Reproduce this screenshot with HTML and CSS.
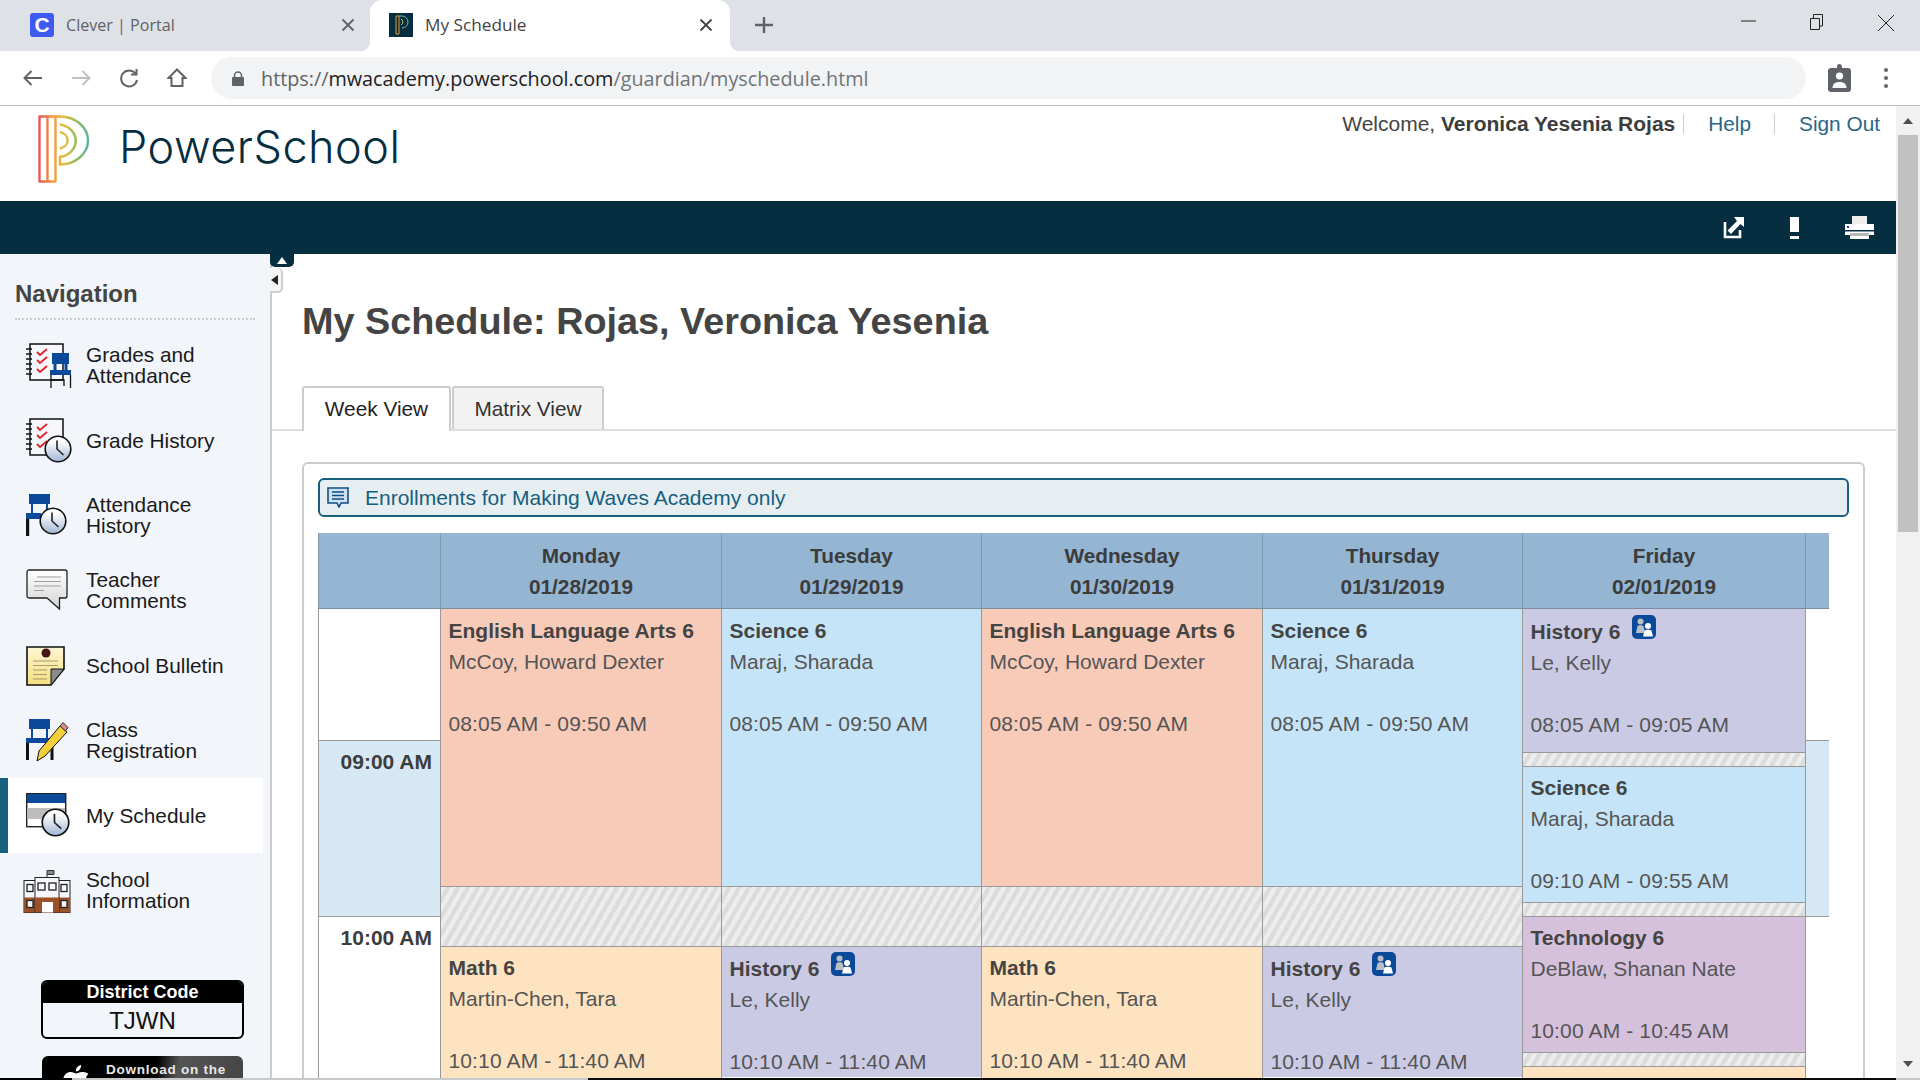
FILE: index.html
```html
<!DOCTYPE html>
<html>
  <head>
    <meta charset="utf-8">
    <meta name="viewport" content="width=device-width, initial-scale=1.0">
    <title>My Schedule</title>
    <link rel="stylesheet" href="styles.css">
  </head>
  <body>
    <svg class="defs" width="0" height="0">
      <defs>
        <linearGradient id="clockfill" x1="0" y1="0" x2="0" y2="1">
          <stop offset="0.2" stop-color="#ffffff"/>
          <stop offset="1" stop-color="#9fb4d4"/>
        </linearGradient>
        <linearGradient id="bubblefill" x1="0" y1="0" x2="0" y2="1">
          <stop offset="0" stop-color="#ffffff"/>
          <stop offset="1" stop-color="#d4d4d4"/>
        </linearGradient>
        <linearGradient id="notefill" x1="0" y1="0" x2="0" y2="1">
          <stop offset="0" stop-color="#fdf6d4"/>
          <stop offset="1" stop-color="#f6df7e"/>
        </linearGradient>
        <linearGradient id="logofill" gradientUnits="userSpaceOnUse" x1="0" y1="0" x2="52" y2="0">
          <stop offset="0" stop-color="#e4525a"/>
          <stop offset="0.3" stop-color="#f59a3c"/>
          <stop offset="0.5" stop-color="#e6bf3e"/>
          <stop offset="0.75" stop-color="#8dbb5a"/>
          <stop offset="1" stop-color="#56b3a6"/>
        </linearGradient>
        <symbol id="clock" viewBox="0 0 28 28">
          <circle cx="14" cy="14" r="12.8" fill="url(#clockfill)" stroke="#111" stroke-width="1.6"/>
          <path d="M13 5.5V14L19.5 20" fill="none" stroke="#222" stroke-width="1.6"/>
        </symbol>
        <symbol id="notebook" viewBox="0 0 38 38">
          <rect x="4" y="1" width="33" height="36" fill="#f6f7fa" stroke="#111" stroke-width="1.5"/>
          <path d="M0 6H6M0 11H6M0 16H6M0 21H6M0 26H6M0 31H6" stroke="#111" stroke-width="1.3"/>
          <path d="M11 9L14 12L21 6M11 17L14 20L21 14M11 26L14 29L21 23" fill="none" stroke="#e4202e" stroke-width="1.8"/>
        </symbol>
        <symbol id="person" viewBox="0 0 24 24">
          <rect width="24" height="24" rx="5" fill="#0b4a9a"/>
          <circle cx="8.5" cy="6.500" r="3" fill="#b9bfc4"/>
          <path d="M4 18L5.500 11C6.500 10 10.500 10 11.500 11L13 18Z" fill="#b9bfc4"/>
          <circle cx="16" cy="11" r="3" fill="#fff"/>
          <path d="M11 21.500L12.500 15.500C13.500 14.500 18.500 14.500 19.500 15.500L21 21.500Z" fill="#fff"/>
        </symbol>
      </defs>
    </svg>

    <div class="tabstrip">
      <div class="tab">
        <span class="favicon clever">C</span>
        <span class="tab-title">Clever | Portal</span>
        <svg class="tab-close" viewBox="0 0 14 14"><path d="M1.5 1.5L12.5 12.5M12.5 1.5L1.5 12.5"/></svg>
      </div>
      <div class="tab active">
        <svg class="favicon" viewBox="0 0 24 24">
          <rect width="24" height="24" fill="#052e40"/>
          <path d="M7 3H10V21H7Z" fill="none" stroke="#e89a3c"/>
          <path d="M10 3H13A6 6 0 0 1 13 15" fill="none" stroke="#7dbb8c"/>
          <path d="M12 6A3.4 3.4 0 0 1 12 12" fill="none" stroke="#c4c45a"/>
        </svg>
        <span class="tab-title">My Schedule</span>
        <svg class="tab-close dark" viewBox="0 0 14 14"><path d="M1.5 1.5L12.5 12.5M12.5 1.5L1.5 12.5"/></svg>
      </div>
      <svg class="newtab" viewBox="0 0 20 16"><path d="M10 0V16M1 8H19"/></svg>
      <div class="winctl">
        <svg width="16" height="16" viewBox="0 0 16 16"><path d="M0 7H15"/></svg>
        <svg width="16" height="16" viewBox="0 0 16 16"><path d="M1.5 4.5H10.5V15.5H1.5ZM4.5 4.5V0.5H13.5V12H10.5"/></svg>
        <svg width="18" height="18" viewBox="0 0 18 18"><path d="M1 1L17 17M17 1L1 17"/></svg>
      </div>
    </div>

    <div class="addressbar">
      <svg class="navbtn" viewBox="0 0 20 16"><path d="M19 8H2M8.5 1L1.5 8L8.5 15"/></svg>
      <svg class="navbtn off" viewBox="0 0 20 16"><path d="M1 8H18M11.5 1L18.5 8L11.5 15"/></svg>
      <svg class="navbtn" viewBox="0 0 20 20"><path d="M16.5 5.5A8 8 0 1 0 18 12M17.5 1V6.5H12"/></svg>
      <svg class="navbtn" viewBox="0 0 20 20"><path d="M10 1.5L18.5 10H15.5V18H4.5V10H1.5Z"/></svg>
      <div class="omnibox">
        <svg class="lock" viewBox="0 0 14 15"><path d="M3.5 6.5V4.5A3.5 3.5 0 0 1 10.5 4.5V6.5" fill="none" stroke="#5f6368" stroke-width="1.5"/><rect x="1" y="6" width="12" height="9" rx="1" fill="#5f6368"/></svg>
        <span class="url"><span class="url-dim">https://</span>mwacademy.powerschool.com<span class="url-dim2">/guardian/myschedule.html</span></span>
      </div>
      <svg class="badge" viewBox="0 0 23 28"><path d="M9 4V2.5A2.5 2.5 0 0 1 14 2.5V4H20A3 3 0 0 1 23 7V25A3 3 0 0 1 20 28H3A3 3 0 0 1 0 25V7A3 3 0 0 1 3 4Z" fill="#5f6368"/><circle cx="11.5" cy="12" r="3.6" fill="#fff"/><path d="M4.5 24C4.5 19.5 8 18 11.5 18S18.5 19.5 18.5 24Z" fill="#fff"/></svg>
      <div class="dots"><i></i><i></i><i></i></div>
    </div>

    <div class="page">
      <div class="view">
        <header class="ps-header">
          <svg class="ps-logo" width="52" height="68" viewBox="0 0 52 68">
            <g fill="none" stroke="url(#logofill)" stroke-width="2.4" stroke-linejoin="round">
              <path d="M1.5 1.5H9.500V66.500H1.500Z"/>
              <path d="M9.500 1.500H17.500V66.500H9.500"/>
              <path d="M17.500 1.500H22A28 24 0 0 1 22 49.500V42A19 16.500 0 0 0 22 9.500"/>
              <path d="M22 17A10 8.500 0 0 1 22 33.500"/>
            </g>
          </svg>
          <span class="wordmark">PowerSchool</span>
          <div class="userlinks">
            <span class="welcome">Welcome, <b>Veronica Yesenia Rojas</b></span>
            <span class="sep"></span>
            <a href="#">Help</a>
            <span class="sep sep-wide"></span>
            <a href="#">Sign Out</a>
          </div>
        </header>

        <div class="toolbar">
          <svg class="tool" width="21" height="22" viewBox="0 0 21 22"><path d="M2 5V20H17V13" fill="none" stroke="#fff" stroke-width="2.6"/><path d="M21 0V10L17.5 7L8 17L4.5 13.5L14 4L11 0Z" fill="#fff"/></svg>
          <svg class="tool" width="9" height="22" viewBox="0 0 9 22"><path d="M0 0H9V15H0ZM0 19H9V22H0Z" fill="#fff"/></svg>
          <svg class="tool" width="29" height="23" viewBox="0 0 29 23"><path d="M7 0H22V9H7Z" fill="#eee"/><path d="M0 8H29V17H0Z" fill="#fff"/><path d="M0 14H29V15.5H0Z" fill="#052e40"/><path d="M2 10H4V12H2Z" fill="#2222cc"/><path d="M5 17H24V20H5Z" fill="#b8b8b8"/><path d="M0 17H5V19H0ZM24 17H29V19H24ZM5 20H24V23H5Z" fill="#fff"/></svg>
        </div>

        <div class="workspace">
          <aside class="sidebar">
            <h2 class="nav-title">Navigation</h2>
            <nav class="nav">
              <a class="nav-item" href="#">
                <svg class="nav-icon" viewBox="0 0 46 46">
                  <use href="#notebook" x="0" y="0" width="38" height="38"/>
                  <rect x="26" y="10" width="17" height="11" fill="#0b4a9a"/>
                  <path d="M29 21V27M40 21V27" stroke="#0b4a9a" stroke-width="3"/>
                  <rect x="24" y="27" width="21" height="5" fill="#0b4a9a"/>
                  <path d="M25 32V45M44.500 32V45M25 37H38V43" fill="none" stroke="#111" stroke-width="1.3"/>
                </svg>
                <span class="two-line">Grades and<br>Attendance</span>
              </a>
              <a class="nav-item" href="#">
                <svg class="nav-icon" viewBox="0 0 46 46">
                  <use href="#notebook" x="0" y="0" width="38" height="38"/>
                  <use href="#clock" x="18" y="17" width="28" height="28"/>
                </svg>
                <span>Grade History</span>
              </a>
              <a class="nav-item" href="#">
                <svg class="nav-icon" viewBox="0 0 46 46">
                  <rect x="3" y="1" width="21" height="10" fill="#0b4a9a"/>
                  <path d="M6 11V20M21 11V20" stroke="#0b4a9a" stroke-width="2"/>
                  <rect x="0" y="20" width="15" height="6" fill="#0b4a9a"/>
                  <rect x="0" y="26" width="3.200" height="17" fill="#111"/>
                  <use href="#clock" x="13" y="14" width="28" height="28"/>
                </svg>
                <span class="two-line">Attendance<br>History</span>
              </a>
              <a class="nav-item" href="#">
                <svg class="nav-icon" viewBox="0 0 46 46">
                  <path d="M3 2H39A2 2 0 0 1 41 4V28A2 2 0 0 1 39 30H33.500V41L21 30H3A2 2 0 0 1 1 28V4A2 2 0 0 1 3 2Z" fill="url(#bubblefill)" stroke="#222" stroke-width="1.3"/>
                  <path d="M11 9H35M8 13.500H35M8 18H35M8 22.500H18" stroke="#a0a0a0" stroke-width="1.2"/>
                </svg>
                <span class="two-line">Teacher<br>Comments</span>
              </a>
              <a class="nav-item" href="#">
                <svg class="nav-icon" viewBox="0 0 46 46">
                  <path d="M1 4H38V26L25 42H1Z" fill="url(#notefill)" stroke="#111" stroke-width="1.600"/>
                  <path d="M38 26H25V42Z" fill="#8a8a8a" stroke="#111" stroke-width="1"/>
                  <circle cx="20" cy="10" r="4.500" fill="#4a1414"/>
                  <path d="M7 18H32M7 22.500H32M7 27H21M7 31.500H21M7 36H21" stroke="#a89a6a" stroke-width="1.200"/>
                </svg>
                <span>School Bulletin</span>
              </a>
              <a class="nav-item" href="#">
                <svg class="nav-icon" viewBox="0 0 46 46">
                  <rect x="3" y="1" width="21" height="10" fill="#0b4a9a"/>
                  <path d="M6 11V20M21 11V20" stroke="#0b4a9a" stroke-width="2"/>
                  <rect x="0" y="20" width="27" height="5" fill="#0b4a9a"/>
                  <path d="M1.500 25V42M26 25V42" stroke="#111" stroke-width="3"/>
                  <path d="M11 43L13 33L34 8L41 14L19 38Z" fill="#f5cf3a" stroke="#111" stroke-width="1"/>
                  <path d="M34 8L37 4.500L42 9.500L39.500 13Z" fill="#d98a8a" stroke="#333" stroke-width="1"/>
                </svg>
                <span class="two-line">Class<br>Registration</span>
              </a>
              <a class="nav-item current" href="#">
                <svg class="nav-icon" viewBox="0 0 46 46">
                  <rect x="0.700" y="0.700" width="39" height="33" fill="#fff" stroke="#222" stroke-width="1.400"/>
                  <rect x="1" y="1" width="38" height="9" fill="#0b4a9a"/>
                  <rect x="1" y="15" width="38" height="11" fill="#bdbdbd"/>
                  <use href="#clock" x="15" y="15" width="29" height="29"/>
                </svg>
                <span>My Schedule</span>
              </a>
              <a class="nav-item" href="#">
                <svg class="nav-icon wide" viewBox="0 0 48 46">
                  <path d="M24 9.500V2.500H31V6.500H24" fill="#888" stroke="#333" stroke-width="1"/>
                  <rect x="1" y="12.500" width="46" height="32" fill="#f6f7fa" stroke="#222" stroke-width="1"/>
                  <rect x="1" y="29.500" width="46" height="15" fill="#9a5127"/>
                  <rect x="12" y="9.500" width="24" height="35" fill="#f6f7fa" stroke="#222" stroke-width="1"/>
                  <rect x="12" y="29.500" width="24" height="15" fill="#9a5127"/>
                  <rect x="15" y="15" width="7" height="7" fill="none" stroke="#222" stroke-width="1.300"/>
                  <rect x="26" y="15" width="7" height="7" fill="none" stroke="#222" stroke-width="1.300"/>
                  <rect x="4" y="16.500" width="6" height="7" fill="none" stroke="#222" stroke-width="1.300"/>
                  <rect x="38" y="16.500" width="6" height="7" fill="none" stroke="#222" stroke-width="1.300"/>
                  <rect x="4" y="32.500" width="6" height="7" fill="#f2f2f2" stroke="#222" stroke-width="1.300"/>
                  <rect x="38" y="32.500" width="6" height="7" fill="#f2f2f2" stroke="#222" stroke-width="1.300"/>
                  <rect x="19" y="34" width="11" height="10.500" fill="#fff"/>
                </svg>
                <span class="two-line">School<br>Information</span>
              </a>
            </nav>
            <div class="district">
              <div class="district-label">District Code</div>
              <div class="district-code">TJWN</div>
            </div>
            <div class="appstore">
              <svg class="apple" width="27" height="30" viewBox="0 0 27 30"><path d="M19 7C16 7 15 8.500 13.500 8.500S10 7 7.500 7C3.500 7 0 10.500 0 16C0 22.500 5 30 8 30C10 30 11 28.500 13.500 28.500S17 30 19 30C22 30 27 22 27 20C24 18.500 23 16 23 14C23 11.500 24.500 9.500 25.500 9C24 7.500 21.500 7 19 7ZM18 0C18.500 3.500 15.500 6.500 13 6.500C12.500 3.500 15 0.500 18 0Z" fill="#fff"/></svg>
              <span>Download on the</span>
            </div>
          </aside>

          <button class="pull pull-up" aria-label="Collapse header"></button>
          <button class="pull pull-left" aria-label="Collapse navigation"></button>

          <main class="content">
            <h1 class="title">My Schedule: Rojas, Veronica Yesenia</h1>
            <div class="viewtabs">
              <a class="viewtab selected" href="#">Week View</a>
              <a class="viewtab" href="#">Matrix View</a>
            </div>
            <section class="box">
              <div class="notice">
                <svg class="notice-icon" width="22" height="21" viewBox="0 0 22 21">
                  <path d="M1 1H21V16H14L12 20L10 16H1Z" fill="#cfe0f2" stroke="#0f4f86" stroke-width="1.600"/>
                  <path d="M5 5H17M5 8.500H17M5 12H17" stroke="#0f4f86" stroke-width="1.500"/>
                </svg>
                <span>Enrollments for Making Waves Academy only</span>
              </div>

              <div class="week week-head">
                <div class="daycell"></div>
                <div class="daycell">Monday<br>01/28/2019</div>
                <div class="daycell">Tuesday<br>01/29/2019</div>
                <div class="daycell">Wednesday<br>01/30/2019</div>
                <div class="daycell">Thursday<br>01/31/2019</div>
                <div class="daycell">Friday<br>02/01/2019</div>
                <div class="daycell"></div>
              </div>

              <div class="week week-body">
                <div class="col">
                  <div class="hour h-first"></div>
                  <div class="hour h-nine">09:00 AM</div>
                  <div class="hour h-ten">10:00 AM</div>
                </div>

                <div class="col day">
                  <div class="block ela long">
                    <p class="course">English Language Arts 6</p>
                    <p>McCoy, Howard Dexter</p>
                    <p class="when">08:05 AM - 09:50 AM</p>
                  </div>
                  <div class="gap gap-long"></div>
                  <div class="block math">
                    <p class="course">Math 6</p>
                    <p>Martin-Chen, Tara</p>
                    <p class="when">10:10 AM - 11:40 AM</p>
                  </div>
                </div>

                <div class="col day">
                  <div class="block science long">
                    <p class="course">Science 6</p>
                    <p>Maraj, Sharada</p>
                    <p class="when">08:05 AM - 09:50 AM</p>
                  </div>
                  <div class="gap gap-long"></div>
                  <div class="block history">
                    <p class="course">History 6 <svg class="people"><use href="#person"/></svg></p>
                    <p>Le, Kelly</p>
                    <p class="when">10:10 AM - 11:40 AM</p>
                  </div>
                </div>

                <div class="col day">
                  <div class="block ela long">
                    <p class="course">English Language Arts 6</p>
                    <p>McCoy, Howard Dexter</p>
                    <p class="when">08:05 AM - 09:50 AM</p>
                  </div>
                  <div class="gap gap-long"></div>
                  <div class="block math">
                    <p class="course">Math 6</p>
                    <p>Martin-Chen, Tara</p>
                    <p class="when">10:10 AM - 11:40 AM</p>
                  </div>
                </div>

                <div class="col day">
                  <div class="block science long">
                    <p class="course">Science 6</p>
                    <p>Maraj, Sharada</p>
                    <p class="when">08:05 AM - 09:50 AM</p>
                  </div>
                  <div class="gap gap-long"></div>
                  <div class="block history">
                    <p class="course">History 6 <svg class="people"><use href="#person"/></svg></p>
                    <p>Le, Kelly</p>
                    <p class="when">10:10 AM - 11:40 AM</p>
                  </div>
                </div>

                <div class="col day">
                  <div class="block history p1">
                    <p class="course">History 6 <svg class="people"><use href="#person"/></svg></p>
                    <p>Le, Kelly</p>
                    <p class="when">08:05 AM - 09:05 AM</p>
                  </div>
                  <div class="gap gap-short"></div>
                  <div class="block science p2">
                    <p class="course">Science 6</p>
                    <p>Maraj, Sharada</p>
                    <p class="when">09:10 AM - 09:55 AM</p>
                  </div>
                  <div class="gap gap-short"></div>
                  <div class="block tech p3">
                    <p class="course">Technology 6</p>
                    <p>DeBlaw, Shanan Nate</p>
                    <p class="when">10:00 AM - 10:45 AM</p>
                  </div>
                  <div class="gap gap-short"></div>
                  <div class="block math"></div>
                </div>

                <div class="col day">
                  <div class="hour h-first"></div>
                  <div class="hour h-nine"></div>
                  <div class="hour h-ten"></div>
                </div>
              </div>
            </section>
          </main>
        </div>
      </div>

      <div class="scrollbar">
        <div class="sb-btn"><i class="sb-up"></i></div>
        <div class="sb-thumb"></div>
        <div class="sb-btn sb-end"><i class="sb-down"></i></div>
      </div>
    </div>

    <div class="taskstrip">
      <i class="ts-a"></i><i class="ts-b"></i><i class="ts-c"></i><i class="ts-d"></i>
    </div>
  </body>
</html>
```

FILE: styles.css
```css
* {
  box-sizing: border-box;
}
html, body {
  height: 1080px;
  margin: 0;
  overflow: hidden;
}
body {
  background:  #fff;
  color:       #444;
  font-family: "Liberation Sans", Arial, sans-serif;
  font-size:   20.8px;
}
a {
  color:           #2a6685;
  text-decoration: none;
}
p {
  margin: 0;
}
.defs {
  display:  block;
  height:   0;
  position: absolute;
}

/* browser chrome */
.tabstrip {
  align-items: flex-end;
  background:  #dee1e6;
  display:     flex;
  height:      51px;
  padding-left: 18px;
}
.tab {
  align-items: center;
  display:     flex;
  height:      51px;
  padding:     0 15px 2px 12px;
  width:       352px;
  font-family: "Open Sans", sans-serif;
  font-size:   16.1px;
  color:       #5f6368;
}
.tab.active {
  background:    #fff;
  border-radius: 12px 12px 0 0;
  color:         #444;
  font-size:     17.2px;
  padding:       0 17px 2px 19px;
  position:      relative;
  width:         360px;
}
.tab.active::before,
.tab.active::after {
  bottom:   0;
  content:  "";
  height:   10px;
  position: absolute;
  width:    10px;
}
.tab.active::before {
  background: radial-gradient(circle at 0 0, #dee1e6 10px, #fff 10.5px);
  left:       -10px;
}
.tab.active::after {
  background: radial-gradient(circle at 100% 0, #dee1e6 10px, #fff 10.5px);
  right:      -10px;
}
.favicon {
  flex:   none;
  height: 24px;
  width:  24px;
}
.clever {
  background:    #3d5af1;
  border-radius: 3px;
  color:         #fff;
  font-family:   "Liberation Sans", sans-serif;
  font-size:     21px;
  font-weight:   bold;
  line-height:   24px;
  text-align:    center;
}
.tab-title {
  flex:        1;
  margin-left: 12px;
}
.tab-close {
  fill:         none;
  height:       14px;
  stroke:       #5f6368;
  stroke-width: 1.8;
  width:        14px;
}
.tab-close.dark {
  stroke: #444;
}
.newtab {
  align-self:    center;
  fill:          none;
  height:        16px;
  margin-bottom: 2px;
  margin-left:   24px;
  stroke:        #5f6368;
  stroke-width:  2.4;
  width:         20px;
}
.winctl {
  align-items: flex-start;
  display:     flex;
  gap:         52px;
  margin-left: auto;
  padding:     14px 25px 0 0;
  align-self:  flex-start;
}
.winctl svg {
  fill:         none;
  stroke:       #222;
  stroke-width: 1;
}
.addressbar {
  align-items:   center;
  background:    #fff;
  border-bottom: 1px solid #bbb;
  display:       flex;
  height:        55px;
  padding-left:  23px;
}
.navbtn {
  fill:            none;
  height:          20px;
  margin-right:    28px;
  stroke:          #5f6368;
  stroke-width:    2;
  width:           20px;
}
.navbtn.off {
  stroke: #bdc1c6;
}
.navbtn:nth-child(4) {
  margin-right: 24px;
}
.omnibox {
  align-items:   center;
  background:    #f1f3f4;
  border-radius: 21px;
  display:       flex;
  height:        42px;
  padding-left:  20px;
  width:         1595px;
}
.lock {
  height:       15px;
  margin-right: 16px;
  width:        14px;
}
.url {
  color:       #202124;
  font-family: "Open Sans", sans-serif;
  font-size:   19.8px;
}
.url-dim {
  color: #5f6368;
}
.url-dim2 {
  color: #70757a;
}
.badge {
  height:      28px;
  margin-left: 22px;
  width:       23px;
}
.dots {
  display:        flex;
  flex-direction: column;
  gap:            4px;
  margin-left:    33px;
}
.dots i {
  background:    #5f6368;
  border-radius: 50%;
  height:        4px;
  width:         4px;
}

/* page */
.page {
  display: flex;
  height:  972px;
}
.view {
  display:        flex;
  flex-direction: column;
  width:          1896px;
}
.ps-header {
  align-items: flex-start;
  display:     flex;
  height:      95px;
  padding:     9px 16px 0 38px;
}
.ps-logo {
  flex: none;
}
.wordmark {
  color:          #052e40;
  font-family:    "Inter", sans-serif;
  font-size:      45px;
  font-weight:    300;
  letter-spacing: 0.5px;
  line-height:    54px;
  margin:         5px 0 0 29px;
}
.userlinks {
  align-items: center;
  display:     flex;
  font-size:   21px;
  line-height: 24px;
  margin-left: auto;
  margin-top:  -3px;
}
.userlinks a {
  font-size: 20.8px;
}
.userlinks b {
  color: #3c3c3c;
}
.sep {
  background: #ccc;
  height:     20px;
  margin:     0 24px 0 8px;
  width:      1px;
}
.sep-wide {
  margin-left: 23px;
}
.toolbar {
  align-items: center;
  background:  #052e40;
  display:     flex;
  flex:        none;
  gap:         0;
  height:      53px;
  padding:     0 22px 0 0;
  justify-content: flex-end;
}
.tool:nth-child(1) {
  margin-right: 46px;
}
.tool:nth-child(2) {
  margin-right: 46px;
}

/* sidebar */
.workspace {
  display:  flex;
  flex:     1;
  min-height: 0;
  position: relative;
}
.sidebar {
  background:   #f2f5fa;
  border-right: 2px solid #ccc;
  flex:         none;
  overflow:     hidden;
  padding-top:  26px;
  width:        272px;
}
.nav-title {
  border-bottom: 2px dotted #ccc;
  color:         #444;
  font-size:     24px;
  line-height:   28px;
  margin:        0 15px 8px 15px;
  padding-bottom: 10px;
}
.nav-item {
  align-items: center;
  color:       #1a1a1a;
  display:     flex;
  height:      75px;
  line-height: 21px;
  padding-left: 26px;
  width:       263px;
}
.nav-item.current {
  background:   #fff;
  border-left:  8px solid #175f7e;
  padding-left: 18px;
}
.two-line {
  padding-bottom: 2px;
}
.nav-icon {
  flex:         none;
  height:       46px;
  margin-right: 14px;
  width:        46px;
}
.nav-icon.wide {
  margin-left:  -3px;
  margin-right: 15px;
  width:        48px;
}
.district {
  border:        2px solid #000;
  border-radius: 6px;
  height:        59px;
  margin:        52px 0 0 41px;
  overflow:      hidden;
  text-align:    center;
  width:         203px;
}
.district-label {
  background:  #000;
  color:       #fff;
  font-size:   18px;
  font-weight: bold;
  height:      21px;
  line-height: 21px;
}
.district-code {
  color:       #111;
  font-size:   24px;
  line-height: 36px;
}
.appstore {
  background:    linear-gradient(100deg, #000 55%, #555 66%, #444);
  border-radius: 6px 6px 0 0;
  color:         #e8e8e8;
  display:       flex;
  font-size:     13.5px;
  font-weight:   bold;
  height:        50px;
  letter-spacing: 0.75px;
  margin:        17px 0 0 42px;
  padding:       6px 0 0 21px;
  width:         201px;
}
.apple {
  flex:   none;
  margin: 3px 16px 0 0;
}
.pull {
  border:   0;
  padding:  0;
  position: absolute;
}
.pull-up {
  background:    #052e40;
  border-radius: 0 0 5px 5px;
  height:        13px;
  left:          270px;
  top:           0;
  width:         24px;
}
.pull-up::after {
  border-bottom: 7px solid #fff;
  border-left:   5px solid transparent;
  border-right:  5px solid transparent;
  content:       "";
  left:          7px;
  position:      absolute;
  top:           3px;
}
.pull-left {
  background:    #f6f6f6;
  border-bottom: 2px solid #ccc;
  border-radius: 0 5px 5px 0;
  border-right:  2px solid #ccc;
  height:        25px;
  left:          270px;
  top:           14px;
  width:         13px;
}
.pull-left::after {
  border-bottom: 5px solid transparent;
  border-right:  7px solid #222;
  border-top:    5px solid transparent;
  content:       "";
  left:          1px;
  position:      absolute;
  top:           7px;
}

/* content */
.content {
  flex:        1;
  min-width:   0;
  overflow:    hidden;
  padding:     45px 0 0 30px;
}
.title {
  color:       #444;
  font-size:   37.8px;
  line-height: 44px;
  margin:      0 0 43px 0;
}
.viewtabs {
  border-bottom: 2px solid #ddd;
  display:       flex;
  gap:           1px;
  height:        45px;
  margin-left:   -30px;
  padding-left:  30px;
}
.viewtab {
  background:    #f2f2f2;
  border:        2px solid #ccc;
  border-bottom: 0;
  border-radius: 3px 3px 0 0;
  color:         #333;
  height:        43px;
  line-height:   41px;
  text-align:    center;
  width:         152px;
}
.viewtab.selected {
  background: #fff;
  color:      #222;
  height:     45px;
  width:      149px;
}
.box {
  border:        2px solid #ccc;
  border-radius: 6px 6px 0 0;
  height:        800px;
  margin-top:    31px;
  padding:       14px 14px 0 14px;
  width:         1563px;
}
.notice {
  align-items:   center;
  background:    #e6eef2;
  border:        2px solid #175f7e;
  border-radius: 6px;
  color:         #175f7e;
  display:       flex;
  font-size:     21px;
  height:        39px;
  margin-bottom: 16px;
  padding-left:  7px;
}
.notice-icon {
  margin-right: 16px;
}

/* week grid */
.week {
  display:               grid;
  grid-template-columns: 122px 281px 260px 281px 260px 283px 24px;
  width:                 1511px;
}
.week-head {
  background:    #94b6d3;
  border-bottom: 1px solid #7e8e9b;
  height:        76px;
}
.daycell {
  border-left: 1px solid #7f9bb3;
  color:       #3c3c3c;
  font-weight: bold;
  line-height: 31px;
  padding-top: 7px;
  text-align:  center;
}
.col {
  display:        flex;
  flex-direction: column;
  border-left:    1px solid #999;
}
.hour {
  color:       #3c3c3c;
  font-size:   21px;
  font-weight: bold;
  line-height: 31px;
  padding:     5px 8px 0 0;
  text-align:  right;
}
.h-first {
  height: 131px;
}
.h-nine {
  background: #d5e8f4;
  border-top: 1px solid #999;
  height:     176px;
}
.h-ten {
  border-top: 1px solid #999;
  flex:       1;
  min-height: 300px;
}
.block {
  border-top:  1px solid #999;
  color:       #555;
  font-size:   21px;
  line-height: 31px;
  padding:     5px 8px 0 7.5px;
}
.block:first-child {
  border-top: 0;
  padding-top: 6px;
}
.course {
  color:       #444;
  font-weight: bold;
}
.people {
  height:         24px;
  margin-left:    6px;
  vertical-align: 0;
  width:          24px;
}
.when {
  letter-spacing: 0.13px;
  margin-top:     31px;
}
.long {
  height: 277px;
}
.p1 {
  height: 143px;
}
.p2 {
  height: 136px;
}
.p3 {
  height: 136px;
}
.math {
  background: #fde3c0;
  min-height: 160px;
}
.ela {
  background: #f8cbb8;
}
.science {
  background: #c5e4f8;
}
.history {
  background: #cbcae4;
}
.tech {
  background: #d6c1dd;
}
.gap {
  background: repeating-linear-gradient(120deg, #ededed 0 4.3px, #dcdcdc 4.3px 8.6px);
  border-top: 1px solid #999;
}
.gap-long {
  height: 60px;
}
.gap-short {
  height: 14px;
}

/* scrollbar */
.scrollbar {
  background:     #f1f1f1;
  display:        flex;
  flex-direction: column;
  width:          24px;
}
.sb-btn {
  align-items:     center;
  display:         flex;
  height:          29px;
  justify-content: center;
}
.sb-end {
  margin-top: auto;
}
.sb-up {
  border-bottom: 6px solid #505050;
  border-left:   5px solid transparent;
  border-right:  5px solid transparent;
}
.sb-down {
  border-left:   5px solid transparent;
  border-right:  5px solid transparent;
  border-top:    6px solid #505050;
}
.sb-thumb {
  background: #c1c1c1;
  height:     397px;
  margin:     0 2px;
}
.taskstrip {
  display: flex;
  height:  2px;
}
.taskstrip i {
  display: block;
}
.ts-a {
  background: #000;
  width:      72px;
}
.ts-b {
  background: #c8c8c8;
  width:      516px;
}
.ts-c {
  background: #0a0a0a;
  width:      1308px;
}
.ts-d {
  background: #c8c8c8;
  flex:       1;
}
```
